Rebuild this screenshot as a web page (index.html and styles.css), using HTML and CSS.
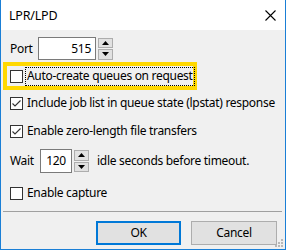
FILE: index.html
```html
<!DOCTYPE html>
<html>
<head>
<meta charset="utf-8">
<link rel="stylesheet" href="styles.css">
</head>
<body>
<div class="dialog">
  <div class="titlebar">
    <span class="title">LPR/LPD</span>
    <svg class="close" width="11" height="11" viewBox="0 0 11 11"><path d="M0.5 0.5 L10.5 10.5 M10.5 0.5 L0.5 10.5" stroke="#000" stroke-width="1.1" fill="none"/></svg>
  </div>
  <div class="content">
    <div class="row port-row">
      <span class="label port-label">Port</span>
      <span class="numbox port-box">515</span>
      <span class="spin">
        <span class="spin-btn"><svg width="7" height="4" viewBox="0 0 7 4"><path d="M3.5 0 L7 4 L0 4 Z" fill="#000"/></svg></span>
        <span class="spin-btn"><svg width="7" height="4" viewBox="0 0 7 4"><path d="M0 0 L7 0 L3.5 4 Z" fill="#000"/></svg></span>
      </span>
    </div>
    <div class="highlight">
      <span class="check"></span>
      <span class="focus">Auto-create queues on request</span>
    </div>
    <div class="row check-row r2">
      <span class="check checked"><svg width="11" height="11" viewBox="0 0 11 11"><path d="M1.5 5.5 L4 8 L9.5 2.5" stroke="#333" stroke-width="1.1" fill="none"/></svg></span>
      <span class="label">Include job list in queue state (lpstat) response</span>
    </div>
    <div class="row check-row r3">
      <span class="check checked"><svg width="11" height="11" viewBox="0 0 11 11"><path d="M1.5 5.5 L4 8 L9.5 2.5" stroke="#333" stroke-width="1.1" fill="none"/></svg></span>
      <span class="label">Enable zero-length file transfers</span>
    </div>
    <div class="row wait-row">
      <span class="label wait-label">Wait</span>
      <span class="numbox wait-box">120</span>
      <span class="spin">
        <span class="spin-btn"><svg width="7" height="4" viewBox="0 0 7 4"><path d="M3.5 0 L7 4 L0 4 Z" fill="#000"/></svg></span>
        <span class="spin-btn"><svg width="7" height="4" viewBox="0 0 7 4"><path d="M0 0 L7 0 L3.5 4 Z" fill="#000"/></svg></span>
      </span>
      <span class="label idle">idle seconds before timeout.</span>
    </div>
    <div class="row check-row r5">
      <span class="check"></span>
      <span class="label">Enable capture</span>
    </div>
    <div class="separator"></div>
    <div class="buttons">
      <span class="btn default">OK</span>
      <span class="btn">Cancel</span>
    </div>
  </div>
  <svg class="grip" width="9" height="9" viewBox="0 0 9 9">
    <rect x="7" y="1" width="2" height="2" fill="#b8b8b8"/>
    <rect x="4" y="4" width="2" height="2" fill="#b8b8b8"/>
    <rect x="7" y="4" width="2" height="2" fill="#b8b8b8"/>
    <rect x="1" y="7" width="2" height="2" fill="#b8b8b8"/>
    <rect x="4" y="7" width="2" height="2" fill="#b8b8b8"/>
    <rect x="7" y="7" width="2" height="2" fill="#b8b8b8"/>
  </svg>
</div>
</body>
</html>
```

FILE: styles.css
```css
* { box-sizing: border-box; }
html, body { margin: 0; padding: 0; }
body {
  width: 286px;
  height: 250px;
  overflow: hidden;
  font-family: "Noto Sans", "Open Sans", sans-serif;
  font-size: 12px;
  letter-spacing: -0.3px;
  color: #000;
}
.dialog {
  position: relative;
  width: 286px;
  height: 250px;
  border-left: 1px solid #1a7fd6;
  border-right: 1px solid #1a7fd6;
  border-bottom: 1px solid #1a7fd6;
  background: #f0f0f0;
  display: flex;
  flex-direction: column;
}
.titlebar {
  height: 30px;
  background: #fff;
  display: flex;
  align-items: center;
  justify-content: space-between;
  padding: 0 9px 0 8px;
  flex: none;
}
.title { font-size: 12.5px; line-height: 1; margin-top: 3px; letter-spacing: -0.2px; }
.close { margin-top: 1px; }
.content {
  flex: 1;
  padding: 0 8px 0 9px;
  display: flex;
  flex-direction: column;
}
.row { display: flex; align-items: center; }
.label { white-space: nowrap; line-height: 1; }
.port-row { margin-top: 7px; height: 23px; }
.port-label { width: 28px; }
.numbox {
  height: 23px;
  border: 1px solid #7a7a7a;
  background: #fff;
  display: flex;
  align-items: center;
  line-height: 1;
}
.port-box { width: 58px; justify-content: flex-end; padding-right: 4px; }
.spin {
  display: flex;
  flex-direction: column;
  gap: 1px;
  margin-left: 2px;
  height: 22px;
}
.spin-btn {
  width: 15px;
  height: 10.5px;
  flex: 1;
  background: #e1e1e1;
  border: 1px solid #adadad;
  display: flex;
  align-items: center;
  justify-content: center;
}
.highlight {
  margin-top: 2px;
  margin-left: -7px;
  width: 194px;
  height: 28px;
  border: 4px solid #ffd800;
  display: flex;
  align-items: center;
  padding-left: 3px;
}
.check {
  width: 13px;
  height: 13px;
  border: 1px solid #333;
  background: #fff;
  flex: none;
  display: flex;
  align-items: center;
  justify-content: center;
}
.focus {
  margin-left: 2px;
  border: 1px dotted #000;
  padding: 2px 1px 3px 1px;
  white-space: nowrap;
  line-height: 1;
}
.check-row { height: 20px; }
.check-row .label { margin-left: 4px; }
.r2 { margin-top: 3px; }
.r3 { margin-top: 8px; }
.wait-row { margin-top: 8px; height: 24px; }
.wait-label { width: 30px; }
.wait-box { width: 32px; height: 24px; justify-content: center; }
.wait-row .spin { height: 22px; }
.idle { margin-left: 8px; }
.r5 { margin-top: 10px; }
.separator {
  margin-top: 8px;
  margin-left: -7px;
  margin-right: -5px;
  height: 1px;
  background: #a0a0a0;
}
.buttons {
  margin-top: 9px;
  display: flex;
  justify-content: flex-end;
  gap: 10px;
}
.btn {
  width: 86px;
  height: 24px;
  background: #e1e1e1;
  border: 1px solid #adadad;
  display: flex;
  align-items: center;
  justify-content: center;
  line-height: 1;
}
.btn.default { border: 2px solid #0078d7; width: 85px; }
.grip { position: absolute; right: 2px; bottom: 2px; }
```
